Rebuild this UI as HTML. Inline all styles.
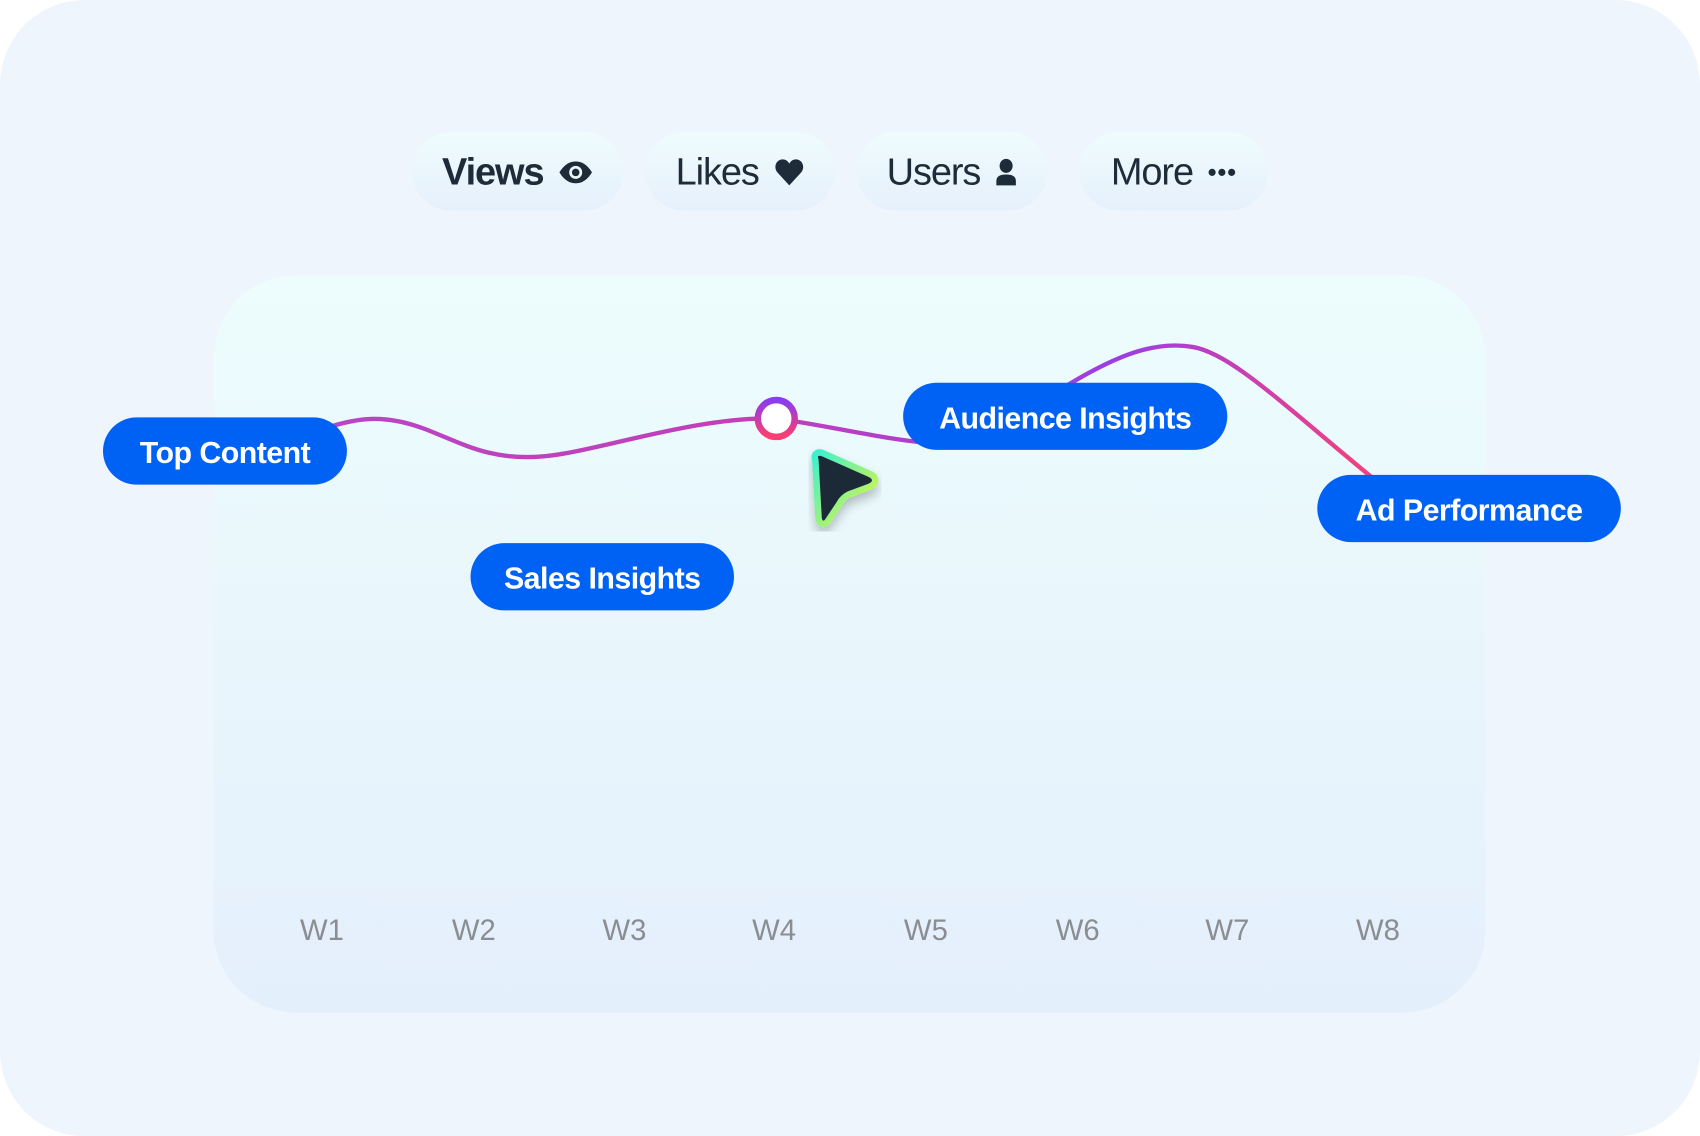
<!DOCTYPE html>
<html><head><style>
html,body{margin:0;padding:0;width:1700px;height:1136px;overflow:hidden;background:#fff;}
#w{position:absolute;left:0;top:0;width:1568px;height:1048px;transform:scale(1.08418);transform-origin:0 0;font-family:"Liberation Sans",sans-serif;}
.bg{position:absolute;left:0;top:0;width:1568px;height:1048px;border-radius:78px;background:#eef5fd;}
.card{position:absolute;left:197px;top:254px;width:1173px;height:680px;border-radius:76px;background:linear-gradient(#edfdfd,#e4effc);}
.tab{position:absolute;top:122px;height:72px;box-sizing:border-box;padding-top:2px;border-radius:36px;background:linear-gradient(#effcfd,#e5f0fc);display:flex;align-items:center;justify-content:center;gap:14px;font-size:35px;color:#1e2b38;letter-spacing:-1px;}
.pill{position:absolute;height:62px;box-sizing:border-box;padding-top:4px;border-radius:31px;background:#0062f5;color:#fff;font-weight:bold;font-size:28px;display:flex;align-items:center;justify-content:center;letter-spacing:-0.5px;}
.wk{position:absolute;top:843px;font-size:27px;color:#8a8e93;width:80px;text-align:center;margin-left:-40px;}
</style></head><body><div id="w">
<div class="bg"></div>
<div class="card"></div>
<div class="tab" style="left:380px;width:195px;font-weight:bold">Views
<svg width="32" height="22" viewBox="0 0 32 22"><path d="M1 11C6 3 11 1 16 1s10 2 15 10c-5 8-10 10-15 10S6 19 1 11z" fill="#1e2b38"/><circle cx="16" cy="11" r="6" fill="#eef8fc"/><circle cx="16" cy="11" r="3.5" fill="#1e2b38"/></svg></div>
<div class="tab" style="left:595px;width:175px">Likes
<svg width="28" height="26" viewBox="0 0 28 26"><path d="M14 25L3 13C-1 8 2 1 8 1c3 0 5 2 6 4 1-2 3-4 6-4 6 0 9 7 5 12z" fill="#1e2b38"/></svg></div>
<div class="tab" style="left:790px;width:176px">Users
<svg width="20" height="26" viewBox="0 0 20 26"><ellipse cx="10" cy="7" rx="6" ry="6.5" fill="#1e2b38"/><path d="M1 25v-4c0-4 3-6 9-6s9 2 9 6v4z" fill="#1e2b38"/></svg></div>
<div class="tab" style="left:995px;width:175px">More
<svg width="26" height="8" viewBox="0 0 26 8"><circle cx="4" cy="4" r="3.3" fill="#1e2b38"/><circle cx="13" cy="4" r="3.3" fill="#1e2b38"/><circle cx="22" cy="4" r="3.3" fill="#1e2b38"/></svg></div>
<svg style="position:absolute;left:0;top:0" width="1568" height="1048">
<defs><linearGradient id="g" x1="300" y1="0" x2="1270" y2="0" gradientUnits="userSpaceOnUse"><stop offset="0" stop-color="#b845c6"/><stop offset="0.4" stop-color="#c23fb8"/><stop offset="0.75" stop-color="#9b3ee6"/><stop offset="1" stop-color="#f5417a"/></linearGradient>
<linearGradient id="c" x1="0" y1="0" x2="0" y2="1"><stop offset="0" stop-color="#8a3cf0"/><stop offset="1" stop-color="#ff3d6e"/></linearGradient>
<linearGradient id="a" x1="0" y1="0" x2="1" y2="1"><stop offset="0" stop-color="#3cf0d0"/><stop offset="1" stop-color="#e8f53a"/></linearGradient>
<filter id="s"><feDropShadow dx="0" dy="6" stdDeviation="5" flood-color="#000" flood-opacity="0.25"/></filter></defs>
<path d="M300 395C330 385 355 382 390 395S450 425 500 421S640 384 716 386C760 392 810 404 850 408M985 355C1030 328 1065 314 1100 320S1180 370 1265 440" fill="none" stroke="url(#g)" stroke-width="4"/>
<circle cx="716" cy="386" r="17" fill="#fff" stroke="url(#c)" stroke-width="6"/>
<path d="M752 424C750 419 754 416 759 418L802 437C809 440 809 446 802 449L783 456C779 458 776 461 774 465L764 480C761 485 756 484 755 478Z" fill="#1e2b38" stroke="url(#a)" stroke-width="6" stroke-linejoin="round" filter="url(#s)"/>
</svg>
<div class="pill" style="left:95px;top:385px;width:225px">Top Content</div>
<div class="pill" style="left:434px;top:501px;width:243px">Sales Insights</div>
<div class="pill" style="left:833px;top:353px;width:299px">Audience Insights</div>
<div class="pill" style="left:1215px;top:438px;width:280px">Ad Performance</div>
<div class="wk" style="left:297px">W1</div><div class="wk" style="left:437px">W2</div><div class="wk" style="left:576px">W3</div><div class="wk" style="left:714px">W4</div><div class="wk" style="left:854px">W5</div><div class="wk" style="left:994px">W6</div><div class="wk" style="left:1132px">W7</div><div class="wk" style="left:1271px">W8</div>
</div></body></html>
